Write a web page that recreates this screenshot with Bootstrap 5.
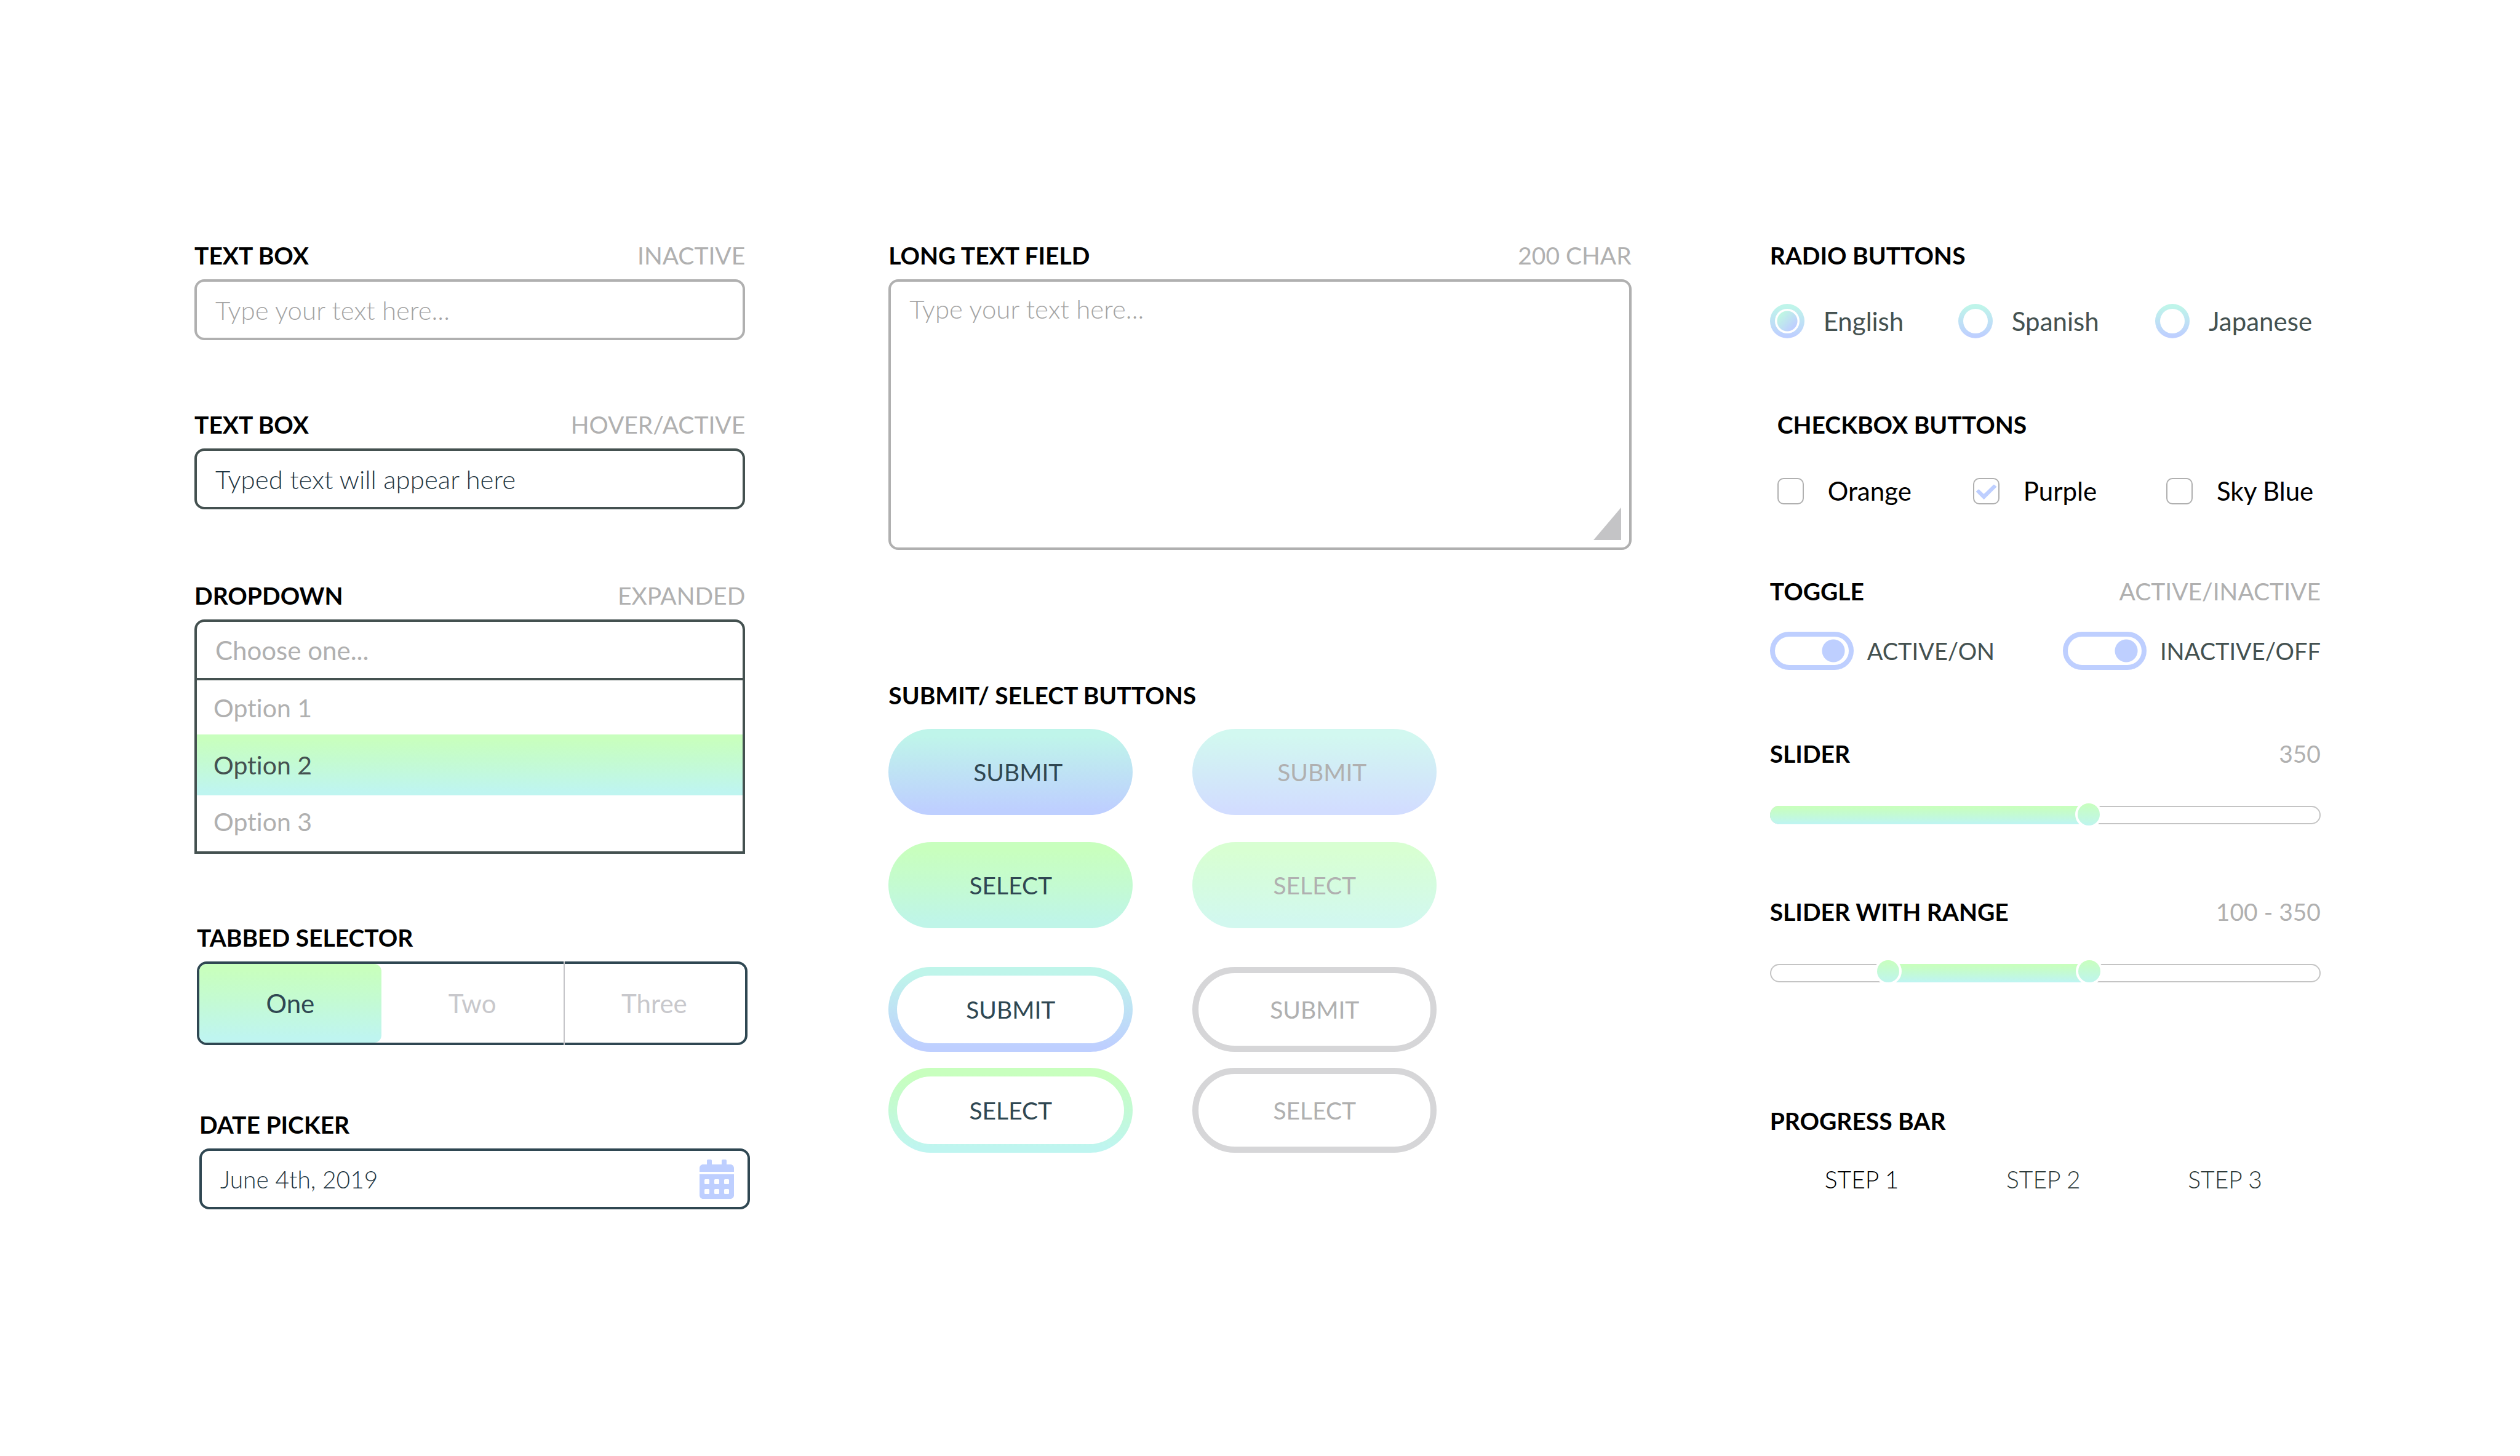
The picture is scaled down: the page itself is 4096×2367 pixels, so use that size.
<!DOCTYPE html>
<html lang="en">
<head>
<meta charset="utf-8">
<meta name="viewport" content="width=device-width, initial-scale=1">
<title>Form Elements</title>
<link rel="stylesheet" href="https://cdn.jsdelivr.net/npm/bootstrap@5.3.0/dist/css/bootstrap.min.css">
<style>
:root{
  --ink:#2f4752; --slate:#445150; --mute:#b0b0b0; --line:#c4c4c4; --peri:#becfff;
  --mint:linear-gradient(180deg,#c8ffbe 8%,#c4fbd0 42%,#bff5f0 94%);
  --mint-btn:linear-gradient(180deg,#c8ffbe 10%,#c4fbd0 48%,#bff5e8 92%);
  --sky:linear-gradient(180deg,#bff5ea 8%,#becfff 94%);
}
body{font-family:Lato,"Open Sans",sans-serif;font-size:42px;line-height:48px;color:var(--slate);background:#fff}
body,button,input,select,textarea{font-variant-ligatures:none}
.sheet{display:grid;grid-template-columns:895fr 1215fr 895fr;column-gap:225px;padding:391px 324px 120px 316px}
.col-mid{padding-left:8px}
.shift-tabs{padding-left:4px;margin-right:-4px}
.shift-date{padding-left:8px;margin-right:-8px}
.head{display:flex;justify-content:space-between;margin:0 0 15px;font-size:39px;line-height:48px}
.head label,.head h2{margin:0;font-size:39px;line-height:48px;font-weight:700;color:#000}
.head span,.head output{font-size:39px;line-height:48px;color:var(--mute)}
.form-control.field,.form-select.field{height:99px;padding:0 30px;border:4px solid var(--slate);border-radius:16px;font-size:42px;line-height:48px;font-weight:300;color:#1f3642;background-color:#fff}
.form-control.field::placeholder{color:#a4a4a4;opacity:1}
.form-control.field.idle{border-color:var(--mute)}
.form-select.field{border-radius:16px 16px 0 0;background-image:none;font-weight:400;color:var(--mute)}
textarea.form-control.field{height:440px;padding:20px 30px;resize:none;display:block}
.grip{position:absolute;right:17px;bottom:16px;width:45px;height:53px;pointer-events:none}
.opts{border:4px solid var(--slate);border-top:0;padding:2px 0 5px}
.opts .list-group-item{height:86px;padding:0 27px;border:0;border-radius:0;font-size:41px;line-height:48px;color:var(--mute);text-align:left;background:none}
.opts .list-group-item.active{height:99px;margin:0;color:var(--slate);background:var(--mint)}
.tabset{height:136px;border:4px solid var(--ink);border-radius:16px;display:flex}
.tabset .btn{flex:1 1 0;padding:0;border:0;border-radius:0;font-size:42px;line-height:48px;color:#c8c8cc;position:relative}
.tabset .btn.active{border-radius:12px;background:var(--mint);color:var(--ink)}
.tabset .btn:last-child::before{content:"";position:absolute;left:0;top:-4px;bottom:-4px;width:2px;background:#c4c4c8}
.form-control.field.dated{font-size:39px;padding-right:110px;border-color:var(--ink)}
.cal{position:absolute;right:26px;top:18px;width:56px;height:64px;fill:var(--peri)}
.pills{display:grid;grid-template-columns:397px 397px;column-gap:97px;row-gap:44px}
.pills.outlines{row-gap:26px;margin-top:63px}
.pills .btn{height:140px;padding:0;border:0;border-radius:70px;font-size:39px;line-height:48px;color:var(--ink);opacity:1}
.pills .btn.nudged{padding-left:24px}
.pills .btn:disabled{color:var(--mute)}
.fill-sky{background:var(--sky)}
.fill-mint{background:var(--mint-btn)}
.fill-sky:disabled{background:linear-gradient(180deg,#d2f8f0 8%,#d2ddff 94%)}
.fill-mint:disabled{background:linear-gradient(180deg,#d8ffd2 10%,#d5fcdf 48%,#d2f8ef 92%)}
.pills.outlines .btn{height:138px;border:14px solid transparent}
.ring-sky{background:linear-gradient(#fff,#fff) padding-box,var(--sky) border-box}
.ring-mint{background:linear-gradient(#fff,#fff) padding-box,var(--mint) border-box}
.pills.outlines .btn:disabled{border:10px solid #d6d6d8;background:#fff}
.trio{display:grid;align-items:center}
.radios{grid-template-columns:306fr 320fr 269fr;margin-top:55px}
.checks{grid-template-columns:318fr 314fr 251fr;margin-top:60px}
.radios>div{gap:31px}
.checks>div{gap:39px}
.toggles>div{gap:22px}
.trio label{white-space:nowrap}
.checks label{color:#000}
.radios .form-check-input{width:56px;height:56px;margin:0;border:8px solid transparent;border-radius:50%;background:linear-gradient(#fff,#fff) padding-box,var(--sky) border-box}
.radios .form-check-input:checked{background:radial-gradient(circle,transparent 16px,#fff 17px) padding-box,linear-gradient(135deg,#bff5e4 25%,#becfff 75%) padding-box,var(--sky) border-box}
.checks .form-check-input{width:43px;height:43px;margin:0;border:2px solid var(--mute);border-radius:10px;background-color:#fff}
.checks .form-check-input:checked{background-image:url("data:image/svg+xml,%3csvg xmlns='http://www.w3.org/2000/svg' viewBox='0 0 66 66'%3e%3cpath fill='%23becfff' stroke='%23becfff' stroke-width='3' stroke-linejoin='round' d='M9 34 14 30 27 42 52 18 57 22 27 52Z'/%3e%3c/svg%3e");background-size:43px 43px;background-position:center;background-origin:border-box}
.switch{width:136px;height:62px;margin:0;appearance:none;border:8px solid var(--peri);border-radius:31px;background:radial-gradient(circle at 95px 50%,var(--peri) 18px,transparent 19px) padding-box}
.toggles{margin-top:42px}
.toggles label{font-size:38px}
.rail{height:30px;margin-top:61px;border:2px solid transparent;border-radius:15px;background:linear-gradient(#fff,#fff) padding-box,linear-gradient(var(--line),var(--line)) border-box;position:relative}
.rail-fill{position:absolute;top:-2px;bottom:-2px;background:var(--mint)}
.rail-fill.from-start{left:-2px;border-radius:15px 0 0 15px}
.rail input{position:absolute;left:-2px;top:-10px;width:calc(100% + 4px);height:44px;margin:0;appearance:none;background:none;pointer-events:none}
.rail.double input{top:-12px}
.rail input::-webkit-slider-runnable-track{height:44px;background:none}
.rail input::-webkit-slider-thumb{appearance:none;width:44px;height:44px;border:4px solid transparent;border-radius:50%;background:linear-gradient(180deg,#c8ffbe,#bff5ee) padding-box,linear-gradient(#fff,#fff) border-box;pointer-events:auto}
.steps{font-size:39px;font-weight:300;color:#2c3938;margin:47px 95px 0 89px;padding:0;list-style:none}
.steps .current{color:#000}
</style>
<script src="https://cdn.jsdelivr.net/npm/bootstrap@5.3.0/dist/js/bootstrap.bundle.min.js"></script>
</head>
<body>
<main class="sheet">

  <div>
    <section>
      <div class="head"><label for="tb1">TEXT BOX</label><span>INACTIVE</span></div>
      <input id="tb1" type="text" class="form-control field idle" placeholder="Type your text here...">
    </section>
    <section style="margin-top:113px">
      <div class="head"><label for="tb2">TEXT BOX</label><span>HOVER/ACTIVE</span></div>
      <input id="tb2" type="text" class="form-control field" value="Typed text will appear here">
    </section>
    <section style="margin-top:116px">
      <div class="head"><label for="dd">DROPDOWN</label><span>EXPANDED</span></div>
      <select id="dd" class="form-select field"><option>Choose one...</option></select>
      <div class="list-group opts rounded-0">
        <button type="button" class="list-group-item list-group-item-action">Option 1</button>
        <button type="button" class="list-group-item list-group-item-action active">Option 2</button>
        <button type="button" class="list-group-item list-group-item-action">Option 3</button>
      </div>
    </section>
    <section class="shift-tabs" style="margin-top:112px">
      <div class="head"><h2>TABBED SELECTOR</h2></div>
      <div class="tabset" role="tablist">
        <button type="button" role="tab" class="btn active">One</button>
        <button type="button" role="tab" class="btn">Two</button>
        <button type="button" role="tab" class="btn">Three</button>
      </div>
    </section>
    <section class="shift-date" style="margin-top:105px">
      <div class="head"><label for="dp">DATE PICKER</label></div>
      <div class="position-relative">
        <input id="dp" type="text" class="form-control field dated" value="June 4th, 2019">
        <svg class="cal" viewBox="0 0 448 512" aria-hidden="true"><path fill-rule="evenodd" d="M0 464c0 27 21 48 48 48h352c27 0 48-21 48-48V192H0zM76 256h40q12 0 12 12v40q0 12-12 12H76q-12 0-12-12v-40q0-12 12-12zM204 256h40q12 0 12 12v40q0 12-12 12h-40q-12 0-12-12v-40q0-12 12-12zM332 256h40q12 0 12 12v40q0 12-12 12h-40q-12 0-12-12v-40q0-12 12-12zM76 384h40q12 0 12 12v40q0 12-12 12H76q-12 0-12-12v-40q0-12 12-12zM204 384h40q12 0 12 12v40q0 12-12 12h-40q-12 0-12-12v-40q0-12 12-12zM332 384h40q12 0 12 12v40q0 12-12 12h-40q-12 0-12-12v-40q0-12 12-12z"/><path d="M400 64h-48V16c0-9-7-16-16-16h-32c-9 0-16 7-16 16v48H160V16c0-9-7-16-16-16h-32c-9 0-16 7-16 16v48H48C21 64 0 85 0 112v48h448v-48c0-27-21-48-48-48z"/></svg>
      </div>
    </section>
  </div>

  <div class="col-mid">
    <section>
      <div class="head"><label for="ta">LONG TEXT FIELD</label><span>200 CHAR</span></div>
      <div class="position-relative">
        <textarea id="ta" class="form-control field idle" placeholder="Type your text here..."></textarea>
        <svg class="grip" viewBox="0 0 45 53" aria-hidden="true"><path fill="#c4c4c6" d="M45 0V53H0Z"/></svg>
      </div>
    </section>
    <section style="margin-top:212px">
      <div class="head" style="margin-bottom:31px"><h2>SUBMIT/ SELECT BUTTONS</h2></div>
      <div class="pills">
        <button type="button" class="btn fill-sky nudged">SUBMIT</button>
        <button type="button" class="btn fill-sky nudged" disabled>SUBMIT</button>
        <button type="button" class="btn fill-mint">SELECT</button>
        <button type="button" class="btn fill-mint" disabled>SELECT</button>
      </div>
      <div class="pills outlines">
        <button type="button" class="btn ring-sky">SUBMIT</button>
        <button type="button" class="btn" disabled>SUBMIT</button>
        <button type="button" class="btn ring-mint">SELECT</button>
        <button type="button" class="btn" disabled>SELECT</button>
      </div>
    </section>
  </div>

  <div>
    <section>
      <div class="head mb-0"><h2>RADIO BUTTONS</h2></div>
      <div class="trio radios">
        <div class="d-flex align-items-center"><input class="form-check-input" type="radio" name="lang" id="r1" checked><label for="r1">English</label></div>
        <div class="d-flex align-items-center"><input class="form-check-input" type="radio" name="lang" id="r2"><label for="r2">Spanish</label></div>
        <div class="d-flex align-items-center"><input class="form-check-input" type="radio" name="lang" id="r3"><label for="r3">Japanese</label></div>
      </div>
    </section>
    <section style="margin-top:116px;padding-left:12px">
      <div class="head mb-0"><h2>CHECKBOX BUTTONS</h2></div>
      <div class="trio checks">
        <div class="d-flex align-items-center"><input class="form-check-input" type="checkbox" id="c1"><label for="c1">Orange</label></div>
        <div class="d-flex align-items-center"><input class="form-check-input" type="checkbox" id="c2" checked><label for="c2">Purple</label></div>
        <div class="d-flex align-items-center"><input class="form-check-input" type="checkbox" id="c3"><label for="c3">Sky Blue</label></div>
      </div>
    </section>
    <section style="margin-top:115px">
      <div class="head mb-0"><h2>TOGGLE</h2><span>ACTIVE/INACTIVE</span></div>
      <div class="toggles d-flex justify-content-between">
        <div class="d-flex align-items-center"><input class="switch" type="checkbox" role="switch" id="s1" checked><label for="s1">ACTIVE/ON</label></div>
        <div class="d-flex align-items-center"><input class="switch" type="checkbox" role="switch" id="s2"><label for="s2">INACTIVE/OFF</label></div>
      </div>
    </section>
    <section style="margin-top:112px">
      <div class="head mb-0"><label for="sl">SLIDER</label><output for="sl">350</output></div>
      <div class="rail">
        <div class="rail-fill from-start" style="width:58%"></div>
        <input id="sl" type="range" min="0" max="600" value="350">
      </div>
    </section>
    <section style="margin-top:118px">
      <div class="head mb-0"><label for="lo">SLIDER WITH RANGE</label><output for="lo hi">100 - 350</output></div>
      <div class="rail double">
        <div class="rail-fill" style="left:22%;right:42%"></div>
        <input id="lo" type="range" min="-30" max="620" value="100" aria-label="Range start">
        <input id="hi" type="range" min="-30" max="620" value="350" aria-label="Range end">
      </div>
    </section>
    <section style="margin-top:201px">
      <div class="head mb-0"><h2>PROGRESS BAR</h2></div>
      <ol class="steps d-flex justify-content-between">
        <li class="current">STEP 1</li><li>STEP 2</li><li>STEP 3</li>
      </ol>
    </section>
  </div>

</main>
</body>
</html>
